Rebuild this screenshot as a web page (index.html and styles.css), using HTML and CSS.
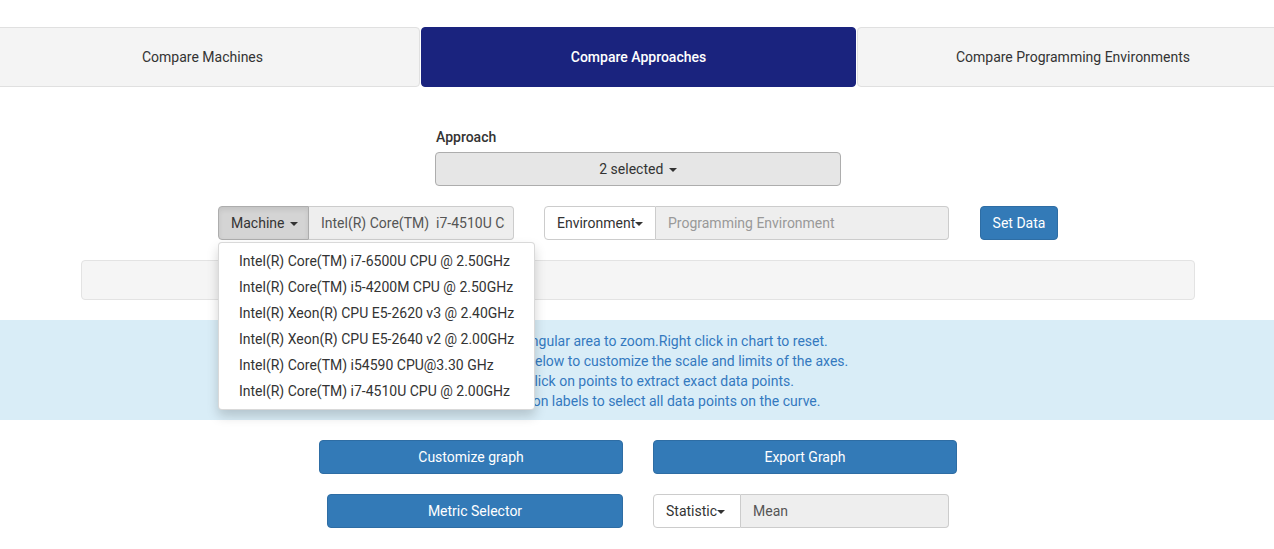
FILE: index.html
```html
<!DOCTYPE html>
<html>
<head>
<meta charset="utf-8">
<link rel="stylesheet" href="styles.css">
</head>
<body>
<nav class="tabs">
  <div class="tab">Compare Machines</div>
  <div class="tab tab-active">Compare Approaches</div>
  <div class="tab">Compare Programming Environments</div>
</nav>

<div class="main">
  <section class="approach">
    <label class="approach-label">Approach</label>
    <button class="multiselect">2 selected <span class="caret"></span></button>
  </section>

  <section class="data-row">
    <div class="input-group machine-group">
      <button class="addon-btn addon-active">Machine <span class="caret"></span></button>
      <div class="group-input machine-input"><span class="clip">Intel(R) Core(TM)&nbsp; i7-4510U CPU @ 2.00GHz</span></div>
      <ul class="dropdown">
        <li>Intel(R) Core(TM) i7-6500U CPU @ 2.50GHz</li>
        <li>Intel(R) Core(TM) i5-4200M CPU @ 2.50GHz</li>
        <li>Intel(R) Xeon(R) CPU E5-2620 v3 @ 2.40GHz</li>
        <li>Intel(R) Xeon(R) CPU E5-2640 v2 @ 2.00GHz</li>
        <li>Intel(R) Core(TM) i54590 CPU@3.30 GHz</li>
        <li>Intel(R) Core(TM) i7-4510U CPU @ 2.00GHz</li>
      </ul>
    </div>
    <div class="input-group env-group">
      <button class="addon-btn">Environment<span class="caret caret-tight"></span></button>
      <div class="group-input placeholder">Programming Environment</div>
    </div>
    <button class="btn-primary set-data">Set Data</button>
  </section>

  <div class="well"></div>
</div>

<div class="info">
  <p>Select a rectangular area to zoom.Right click in chart to reset.</p>
  <p>Use the buttons below to customize the scale and limits of the axes.</p>
  <p>Double click on points to extract exact data points.</p>
  <p>Double click on labels to select all data points on the curve.</p>
</div>

<div class="main">
  <section class="actions">
    <button class="btn-primary wide">Customize graph</button>
    <button class="btn-primary wide">Export Graph</button>
  </section>
  <section class="actions">
    <button class="btn-primary narrow">Metric Selector</button>
    <div class="input-group stat-group">
      <button class="addon-btn">Statistic<span class="caret caret-tight"></span></button>
      <div class="group-input">Mean</div>
    </div>
  </section>
</div>
</body>
</html>
```

FILE: styles.css
```css
* { box-sizing: border-box; }
body {
  margin: 0;
  font-family: Roboto, "Liberation Sans", Arial, sans-serif;
  font-size: 14px;
  line-height: 20px;
  color: #333;
  background: #fff;
  overflow: hidden;
}
button {
  font-family: inherit;
  font-size: 14px;
  line-height: 20px;
  cursor: pointer;
}

.tabs {
  margin: 27px -15px 0;
  display: grid;
  grid-template-columns: 435px 435px 1fr;
  gap: 1px;
}
.tab {
  height: 60px;
  display: flex;
  align-items: center;
  justify-content: center;
  background: #f4f4f4;
  border: 1px solid #e0e0e0;
  border-radius: 4px;
  color: #333;
}
.tab-active {
  background: #1a237e;
  border-color: #1a237e;
  color: #fff;
  font-weight: 500;
}

.main { padding-left: 2px; }

.approach {
  width: 406px;
  margin: 40px auto 0;
  display: flex;
  flex-direction: column;
}
.approach-label {
  font-weight: 500;
  padding-left: 1px;
  margin-bottom: 5px;
}
.multiselect {
  height: 34px;
  background: #e6e6e6;
  border: 1px solid #adadad;
  border-radius: 4px;
  color: #333;
}

.caret {
  display: inline-block;
  width: 0;
  height: 0;
  margin-left: 2px;
  vertical-align: middle;
  border-top: 4px solid;
  border-left: 4px solid transparent;
  border-right: 4px solid transparent;
}
.caret-tight { margin-left: 0; }

.data-row {
  margin-top: 20px;
  display: flex;
  justify-content: center;
}
.input-group {
  position: relative;
  display: flex;
  height: 34px;
}
.addon-btn {
  flex: none;
  height: 34px;
  padding: 6px 0 6px 12px;
  background: #fff;
  border: 1px solid #ccc;
  border-radius: 4px 0 0 4px;
  color: #333;
  white-space: nowrap;
  text-align: left;
}
.addon-active {
  width: 91px;
  background: #d4d4d4;
  border-color: #adadad;
  box-shadow: inset 0 3px 5px rgba(0,0,0,.08);
}
.group-input {
  flex: 1;
  min-width: 0;
  height: 34px;
  padding: 6px 12px;
  background: #eee;
  border: 1px solid #ccc;
  border-left: 0;
  border-radius: 0 4px 4px 0;
  color: #555;
  white-space: nowrap;
  overflow: hidden;
}
.machine-input { padding-right: 8px; display: flex; }
.clip { display: block; overflow: hidden; white-space: nowrap; }
.placeholder { color: #999; }
.machine-group { width: 296px; margin-right: 30px; }
.env-group { width: 405px; margin-right: 31px; }
.env-group .addon-btn { width: 112px; }

.dropdown {
  position: absolute;
  top: 36px;
  left: 0;
  width: 317px;
  margin: 0;
  padding: 5px 0;
  list-style: none;
  background: #fff;
  border: 1px solid rgba(0,0,0,.15);
  border-radius: 4px;
  box-shadow: 0 6px 12px rgba(0,0,0,.175);
  z-index: 10;
}
.dropdown li {
  padding: 3px 20px;
  height: 26px;
  white-space: nowrap;
  color: #333;
}

.btn-primary {
  height: 34px;
  padding: 6px 12px;
  background: #337ab7;
  border: 1px solid #2e6da4;
  border-radius: 4px;
  color: #fff;
}
.set-data { width: 78px; padding: 6px 0; }

.well {
  width: 1114px;
  height: 40px;
  margin: 20px auto 0;
  background: #f5f5f5;
  border: 1px solid #e3e3e3;
  border-radius: 4px;
}

.info {
  margin-top: 20px;
  padding: 11px 0 9px;
  background: #d9edf7;
  color: #3479bf;
  text-align: center;
}
.info p { margin: 0; }

.actions {
  margin-top: 20px;
  display: flex;
  justify-content: center;
  gap: 30px;
}
.wide { width: 304px; }
.narrow { width: 296px; }
.stat-group { width: 296px; }
.stat-group .addon-btn { width: 88px; }
```
